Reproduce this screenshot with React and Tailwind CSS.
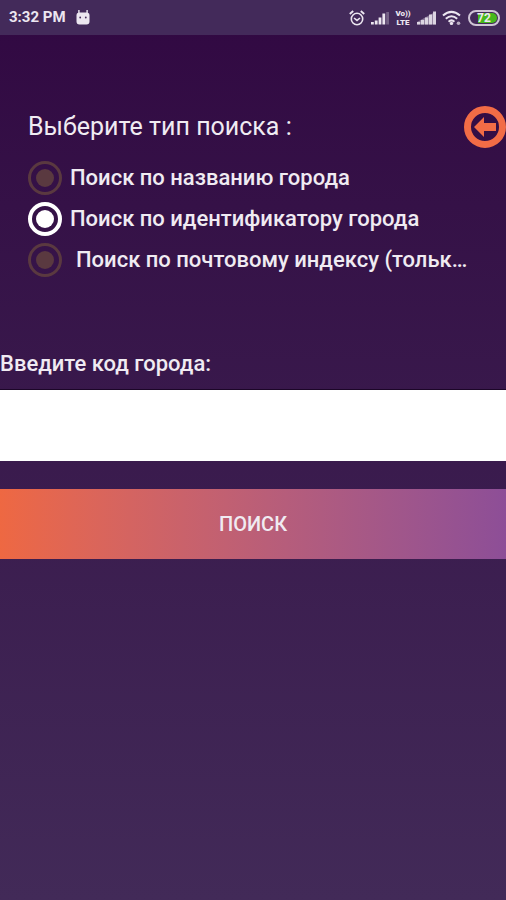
import React, { useState } from 'react';

const searchTypes = [
  { id: 'name', label: 'Поиск по названию города', indent: false },
  { id: 'code', label: 'Поиск по идентификатору города', indent: false },
  { id: 'zip', label: 'Поиск по почтовому индексу (тольк…', indent: true },
];

const StatusBar = () => (
  <div className="flex h-[35px] items-center bg-[#432a5a] pr-1.5 pl-[9px] text-[#ece6f0]">
    <span className="text-[15px] font-bold">3:32 PM</span>
    {/* Android head */}
    <svg className="ml-2.5 h-4 w-3.5" viewBox="0 0 14 16" fill="currentColor">
      <path d="M2.2 0h1.4v2.5h6.8V0h1.4v2.7Q13.5 3.2 13.5 5v6.5q0 3-3 3h-7q-3 0-3-3V5q0-1.8 1.7-2.3z" />
      <circle cx="4.2" cy="7.5" r="0.9" fill="#432a5a" />
      <circle cx="9.8" cy="7.5" r="0.9" fill="#432a5a" />
    </svg>

    <div className="ml-auto flex items-center">
      {/* Alarm */}
      <svg className="h-4 w-4" viewBox="0 0 16 16" fill="none" stroke="currentColor" strokeWidth="1.6">
        <circle cx="8" cy="9" r="5.7" />
        <path d="M0.8 4 4.2 1M15.2 4 11.8 1" strokeWidth="1.9" />
        <path d="M5 8l3 2.4L11 8" />
      </svg>
      {/* Signal of the first SIM */}
      <svg className="ml-1.5 h-3.5 w-[18px]" viewBox="0 0 18 14" fill="currentColor">
        <path d="M0 11h2.8v2.5H0zM3.8 9.5h2.8v4H3.8zM7.6 6.5h2.8v7H7.6zM11.4 2.5h2.8v11h-2.8z" />
        <path d="M15.2 1H18v12.5h-2.8z" opacity="0.3" />
      </svg>
      <div className="ml-1.5 flex w-4 flex-col items-center text-[8px] leading-[9px] font-black">
        <span>Vo))</span>
        <span>LTE</span>
      </div>
      {/* Signal of the second SIM */}
      <svg className="ml-1.5 h-3.5 w-[19px]" viewBox="0 0 19 14" fill="currentColor">
        <path d="M0 11h3.2v2.5H0zM4 9h3.2v4.5H4zM8 6.5h3.2v7H8zM12 3.5h3.2v10H12zM16 0.5h3v13h-3z" opacity="0.85" />
        <path d="M0 11 19 0.5v13H0z" opacity="0.4" />
      </svg>
      {/* Wi-Fi */}
      <svg className="ml-1.5 h-4 w-5" viewBox="0 0 20 16" fill="none" stroke="currentColor" strokeWidth="2">
        <path d="M1 5.6Q9.5-1.8 18 5.6M3.8 8.8Q9.5 3.8 15.2 8.8M6.6 11.8Q9.5 9 12.4 11.8" />
        <circle cx="9.5" cy="13.4" r="1.7" fill="currentColor" stroke="none" />
        <circle cx="16.5" cy="13.2" r="1.8" fill="currentColor" stroke="none" opacity="0.7" />
      </svg>
      <div className="ml-1.5 flex h-4 w-8 rounded-full border-2 border-[#cfc5d6] p-px">
        <div className="flex flex-1 items-center justify-center rounded-full bg-gradient-to-r from-[#432a5a] from-25% to-[#46b81c] to-25% text-[12px] leading-none font-bold">
          72
        </div>
      </div>
    </div>
  </div>
);

const App = () => {
  const [searchType, setSearchType] = useState('code');
  const [cityCode, setCityCode] = useState('');

  return (
    <div className="flex min-h-screen flex-col bg-gradient-to-b from-[#310842] to-[#422a58] font-['Roboto','Noto_Sans',sans-serif] text-[#f0ebf2]">
      <StatusBar />

      <form onSubmit={(e) => e.preventDefault()}>
        <fieldset className="min-w-0 pt-[69px] pl-7">
          <div className="flex h-[45px] items-center justify-between">
            <h1 className="text-[25px]" id="search-type">Выберите тип поиска :</h1>
            <button type="button" aria-label="Назад" className="h-[42px] w-[42px]">
              <svg className="h-full w-full" viewBox="0 0 42 42">
                <circle cx="21" cy="21" r="17.5" fill="none" stroke="#f26c46" strokeWidth="7" />
                <path d="M10 21 20 11v6h12v8H20v6z" fill="#f26c46" />
              </svg>
            </button>
          </div>

          <div role="radiogroup" aria-labelledby="search-type" className="mt-2 pr-7">
            {searchTypes.map((type) => (
              <label key={type.id} className="flex h-[41px] items-center gap-2 text-[22px] font-medium">
                <input
                  type="radio"
                  name="searchType"
                  value={type.id}
                  checked={searchType === type.id}
                  onChange={() => setSearchType(type.id)}
                  className="grid h-[34px] w-[34px] shrink-0 appearance-none place-content-center rounded-full border-3 border-[#5a3940] before:h-[18px] before:w-[18px] before:rounded-full before:bg-[#5a3940] checked:border-4 checked:border-white checked:before:bg-white"
                />
                <span className={type.indent ? 'truncate pl-1.5' : 'truncate'}>{type.label}</span>
              </label>
            ))}
          </div>
        </fieldset>

        <label htmlFor="city-code" className="mt-[67px] block text-[22px] leading-[34px] font-medium">
          Введите код города:
        </label>
        <input
          id="city-code"
          type="text"
          value={cityCode}
          onChange={(e) => setCityCode(e.target.value)}
          className="mt-2 block h-[72px] w-full border-t border-[#1c0628] bg-white px-3 text-[22px] text-gray-900 outline-none"
        />
        <button
          type="submit"
          className="mt-7 block h-[70px] w-full bg-gradient-to-r from-[#ee6842] to-[#8d4e97] text-[20px] font-medium"
        >
          ПОИСК
        </button>
      </form>
    </div>
  );
};

export default App;
